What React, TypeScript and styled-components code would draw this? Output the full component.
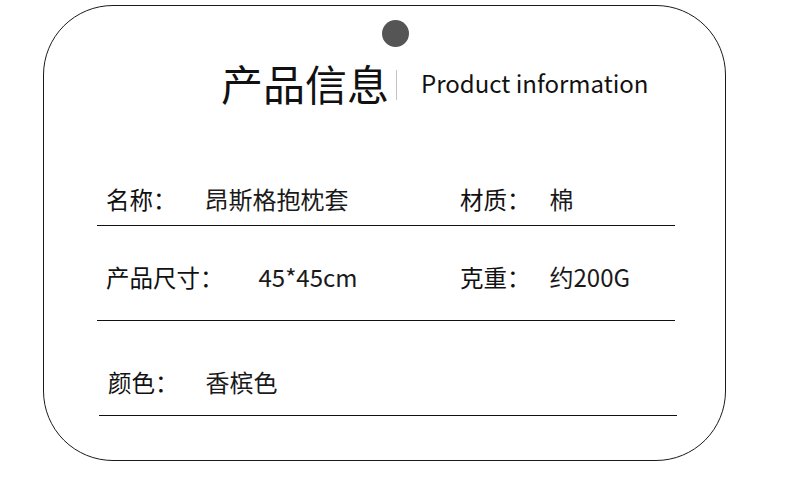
import React from 'react';
import styled, { createGlobalStyle } from 'styled-components';

const GlobalStyle = createGlobalStyle`
    html, body {
        margin: 0;
        padding: 0;
        background-color: #fff;
    }
    body {
        font-family: "Noto Sans CJK SC", "Noto Sans", sans-serif;
        color: #111;
    }
`;

const Page = styled.div`
    width: 790px;
    height: 504px;
    padding: 5px 0 0 43px;
    box-sizing: border-box;
`;

const Card = styled.div`
    width: 683px;
    height: 456px;
    box-sizing: border-box;
    border: 1.5px solid #1a1a1a;
    border-radius: 70px;
    display: flex;
    flex-direction: column;
`;

const Hole = styled.div`
    width: 27px;
    height: 27px;
    border-radius: 50%;
    background-color: #555;
    margin: 14px 0 0 338px;
`;

const Header = styled.div`
    display: flex;
    align-items: center;
    margin: 15px 0 0 177px;
`;

const Title = styled.h1`
    margin: 0;
    font-size: 42px;
    line-height: 42px;
    font-weight: 400;
    color: #111;
`;

const Divider = styled.span`
    width: 1px;
    height: 30px;
    margin: 3px 24px 0 7px;
    background-color: #c4c4c4;
`;

const Subtitle = styled.span`
    font-size: 24px;
    line-height: 24px;
    color: #111;
    margin-top: 0;
`;

const Table = styled.div`
    margin: 27px 0 0 53px;
    width: 578px;
`;

const Row = styled.div<{ $pad: number; $shift?: number }>`
    display: flex;
    align-items: flex-end;
    width: 578px;
    height: 95px;
    box-sizing: border-box;
    padding: 0 0 ${p => p.$pad}px 9px;
    margin-left: ${p => p.$shift || 0}px;
    border-bottom: 1.3px solid #111;
`;

const Cell = styled.div<{ $width?: number }>`
    display: flex;
    align-items: center;
    width: ${p => (p.$width ? `${p.$width}px` : 'auto')};
`;

const Label = styled.span<{ $gap: number }>`
    font-size: 23.5px;
    line-height: 24px;
    color: #111;
    margin-right: ${p => p.$gap}px;
`;

const Value = styled.span`
    font-size: 24px;
    line-height: 24px;
    color: #1a1a1a;
`;

const App: React.FC = () => {
    return (
        <Page>
            <GlobalStyle />
            <Card>
                <Hole />
                <Header>
                    <Title>产品信息</Title>
                    <Divider />
                    <Subtitle>Product information</Subtitle>
                </Header>
                <Table>
                    <Row $pad={14}>
                        <Cell $width={354}>
                            <Label $gap={28}>名称：</Label>
                            <Value>昂斯格抱枕套</Value>
                        </Cell>
                        <Cell>
                            <Label $gap={19}>材质：</Label>
                            <Value>棉</Value>
                        </Cell>
                    </Row>
                    <Row $pad={31}>
                        <Cell $width={354}>
                            <Label $gap={35}>产品尺寸：</Label>
                            <Value>45*45cm</Value>
                        </Cell>
                        <Cell>
                            <Label $gap={19}>克重：</Label>
                            <Value>约200G</Value>
                        </Cell>
                    </Row>
                    <Row $pad={21} $shift={2}>
                        <Cell>
                            <Label $gap={27}>颜色：</Label>
                            <Value>香槟色</Value>
                        </Cell>
                    </Row>
                </Table>
            </Card>
        </Page>
    );
};

export default App;
